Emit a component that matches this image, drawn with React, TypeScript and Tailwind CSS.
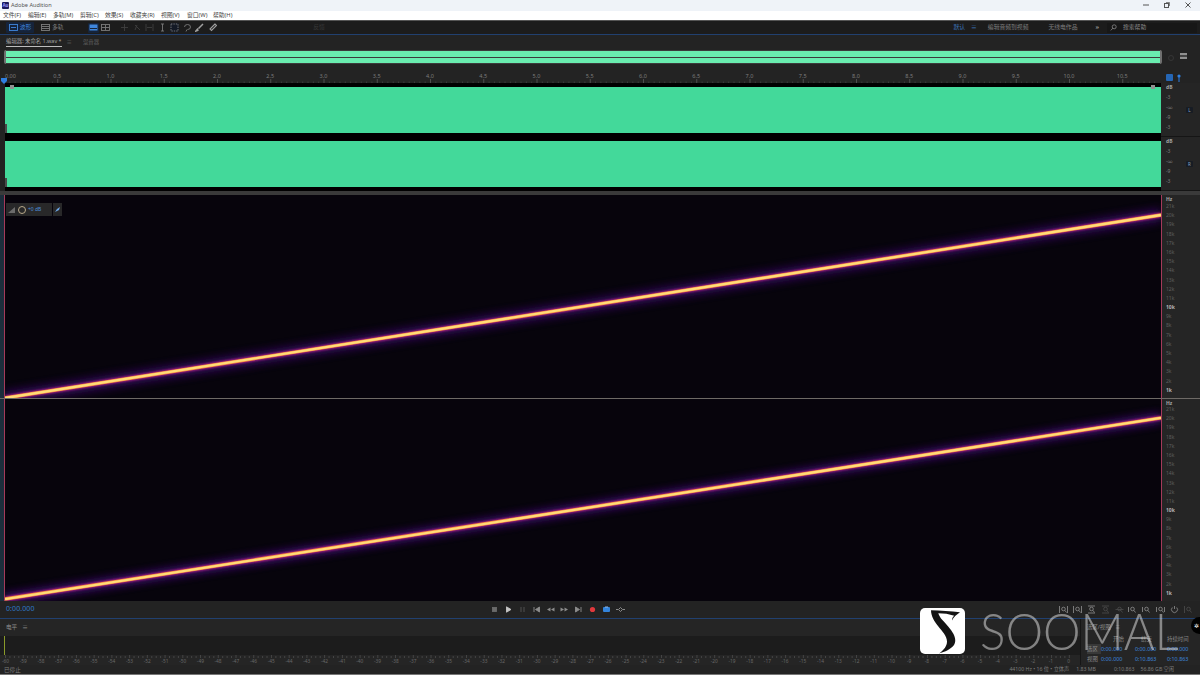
import React from "react";

const cjk = "font-['Noto_Sans','Noto_Sans_CJK_SC',sans-serif]";

const menus = [
  ["文件(F)", "w-[25px]"], ["编辑(E)", "w-[25px]"], ["多轨(M)", "w-[27px]"], ["剪辑(C)", "w-[25px]"], ["效果(S)", "w-[25px]"],
  ["收藏夹(R)", "w-[31px]"], ["视图(V)", "w-[26px]"], ["窗口(W)", "w-[26px]"], ["帮助(H)", "w-[30px]"],
];
const timeLabels = ["0.5","1.0","1.5","2.0","2.5","3.0","3.5","4.0","4.5","5.0","5.5","6.0","6.5","7.0","7.5","8.0","8.5","9.0","9.5","10.0","10.5"];
const freq = ["21k","20k","19k","18k","17k","16k","15k","14k","13k","12k","11k","10k","9k","8k","7k","6k","5k","4k","3k","2k","1k"];
const levels = Array.from({ length: 61 }, (_, i) => i - 60);

function TimeRuler() {
  return (
    <div className="relative flex h-[11px] w-[1157px] items-start bg-[#232323] text-[5.5px] leading-[9px] text-[#7c7c7c]">
      <div className="w-[30.6px] pl-[5px]">0.00</div>
      {timeLabels.map((t) => (
        <div key={t} className="w-[53.25px] text-center">{t}</div>
      ))}
      <svg className="absolute bottom-0 left-0" width="1157" height="4">
        {Array.from({ length: 218 }, (_, i) => {
          const x = 4.5 + i * 5.325;
          const major = i % 10 === 0;
          return <line key={i} x1={x} x2={x} y1={major ? 0 : 2.5} y2="4" stroke={major ? "#6c6c6c" : "#4c4c4c"} strokeWidth="0.6" />;
        })}
      </svg>
      <svg className="absolute left-[1px] top-[6px]" width="7" height="6" viewBox="0 0 7 6">
        <path d="M0 0h6v3L3 6 0 3z" fill="#2f7fe0" />
      </svg>
    </div>
  );
}

function Channel({ badge, pad, labels }: { badge: string; pad: string; labels: string[] }) {
  return (
    <div className="flex h-[54px]">
      <div className="w-[5px] bg-[#222]" />
      <div className={`relative w-[1156px] bg-black ${pad}`}>
        <div className="h-full w-full bg-[#43d99a]" />
        <div className="absolute bottom-[4px] left-0 h-[9px] w-[2px] bg-[#4a4a4a]" />
      </div>
      <div className="relative flex w-[39px] border-b border-[#151515] bg-[#252525]">
        <div className="flex h-full w-[25px] flex-col justify-between pb-[5px] pl-[5px] pt-[1px] text-[5px] leading-[7px] text-[#7f7f7f]">
          {labels.map((l, i) => <div key={i} className={i === 0 ? "font-bold text-[#a0a0a0]" : ""}>{l}</div>)}
        </div>
        <div className="mt-[24px] flex h-[6px] w-[7px] items-center justify-center rounded-[1px] bg-[#171c24] text-[4.5px] text-[#8aa4c4]">{badge}</div>
      </div>
    </div>
  );
}

function Spectrum({ id, height, y0, y1, hz }: { id: string; height: string; y0: number; y1: number; hz: string }) {
  return (
    <div className={`flex ${height}`}>
      <div className="w-[4px] bg-[#1c2e3c]" />
      <div className="w-[1px] bg-[#a53a5a]" />
      <div className="relative flex-1 overflow-hidden bg-[#07040c]">
        <svg className="block h-full w-full" viewBox="0 0 1156 203" preserveAspectRatio="none">
          <defs>
            <filter id={id + "a"} x="-5%" y="-60%" width="110%" height="220%"><feGaussianBlur stdDeviation="4" /></filter>
            <filter id={id + "b"} x="-5%" y="-60%" width="110%" height="220%"><feGaussianBlur stdDeviation="1.3" /></filter>
            <filter id={id + "c"} x="-5%" y="-60%" width="110%" height="220%"><feGaussianBlur stdDeviation="0.4" /></filter>
          </defs>
          <line x1="0" y1={y0} x2="1156" y2={y1} stroke="#3c0e70" strokeWidth="13" filter={`url(#${id}a)`} opacity="0.7" />
          <line x1="0" y1={y0} x2="1156" y2={y1} stroke="#a81f86" strokeWidth="5" filter={`url(#${id}b)`} />
          <line x1="0" y1={y0} x2="1156" y2={y1} stroke="#f58a3a" strokeWidth="3.4" filter={`url(#${id}c)`} />
          <line x1="0" y1={y0} x2="1156" y2={y1} stroke="#ffdc78" strokeWidth="2.3" filter={`url(#${id}c)`} />
        </svg>
      </div>
      <div className="w-[1px] bg-[#a53a5a]" />
      <div className="w-[38px] bg-[#252525] pl-[4px] text-[5px] text-[#5f5f5f]">
        <div className={`${hz} pt-[1px] font-bold leading-[7px] text-[#a5a5a5]`}>Hz</div>
        {freq.map((f) => (
          <div key={f} className={`h-[9.2px] leading-[9.2px] ${f === "10k" || f === "1k" ? "font-bold text-[#b5b5b5]" : ""}`}>{f}</div>
        ))}
      </div>
    </div>
  );
}

const Ico = ({ children, w = 9, className = "" }: { children: React.ReactNode; w?: number; className?: string }) => (
  <svg width={w} height="9" viewBox="0 0 9 9" className={`shrink-0 ${className}`} fill="none" stroke="currentColor" strokeWidth="0.9">{children}</svg>
);

function Toolbar() {
  return (
    <div className="flex h-[13px] items-center whitespace-nowrap bg-[#1c1c1c] text-[5.8px] text-[#7d7d7d]">
      <div className="ml-[6px] flex h-[11px] w-[28px] shrink-0 items-center justify-center gap-[2px] rounded-[1px] bg-[#15233a] text-[#3f86dc]">
        <Ico><rect x="0.5" y="1.5" width="8" height="6" /><path d="M2 4.5h5" /></Ico><span>波形</span>
      </div>
      <div className="ml-[7px] flex w-[23px] shrink-0 items-center gap-[2px]">
        <Ico><rect x="0.5" y="1.5" width="8" height="6" /><path d="M1 3.5h7M1 5.5h7" /></Ico><span>多轨</span>
      </div>
      <div className="ml-[24px] flex gap-[2px]">
        <span className="flex h-[10px] w-[11px] items-center justify-center rounded-[1px] bg-[#15233a]">
          <svg width="9" height="7"><rect x="0.5" y="0.5" width="8" height="6" fill="#3f86dc" /><path d="M1 4.5h7" stroke="#15233a" /></svg>
        </span>
        <span className="flex w-[9px] items-center text-[#7a7a7a]"><Ico><rect x="0.5" y="1.5" width="8" height="6" /><path d="M1 4.5h7M4.5 2v5" /></Ico></span>
      </div>
      <div className="ml-[10px] flex items-center gap-[3.5px]">
        <span className="text-[#404040]"><Ico><path d="M4.5 1v7M1 4.5h7" /></Ico></span>
        <span className="text-[#404040]"><Ico><path d="M2 2l5 5M2 7l2-5" /></Ico></span>
        <span className="text-[#404040]"><Ico><path d="M1 1v7M8 1v7M2 4.5h5" /></Ico></span>
        <span className="text-[#7a7a7a]"><Ico><path d="M4.5 1v7M3 1h3M3 8h3" /></Ico></span>
        <span className="rounded-[1px] bg-[#141a26] text-[#7a7a7a]"><Ico><rect x="1" y="1" width="7" height="7" strokeDasharray="1.4 1" /></Ico></span>
        <span className="text-[#7a7a7a]"><Ico><path d="M1.5 4a3 2.5 0 1 1 3 2.5M4 6.5L3 8.5" /></Ico></span>
        <span className="text-[#a0a0a0]"><Ico><path d="M8 1L3.5 5.5M3 5.5L1 8l2.5-1" strokeWidth="1.5" /></Ico></span>
        <span className="text-[#a0a0a0]"><Ico><path d="M7 1L2 6l1.5 1.5 5-5z" strokeWidth="1.1" /></Ico></span>
      </div>
      <div className="ml-[93px] flex h-[9px] w-[19px] items-center justify-center text-[#383838]">反馈</div>
      <div className="ml-auto flex items-center">
        <span className="text-[#3d78bd]">默认</span>
        <span className="ml-[6px] text-[#3d78bd]">≡</span>
        <span className="ml-[11px]">编辑音频到视频</span>
        <span className="ml-[20px]">无线电作品</span>
        <span className="ml-[18px] font-bold text-[#999]">»</span>
        <div className="ml-[8px] mr-[3px] flex h-[10px] w-[90px] items-center bg-[#171717] pl-[3px] text-[#8a8a8a]">
          <svg width="7" height="7" viewBox="0 0 7 7" fill="none" stroke="currentColor" strokeWidth="0.8"><circle cx="4.2" cy="2.8" r="2" /><path d="M2.8 4.2L.8 6.4" /></svg>
          <span className="ml-[6px]">搜索帮助</span>
        </div>
      </div>
    </div>
  );
}

function Transport() {
  const c = "text-[#8c8c8c]";
  return (
    <div className="relative flex h-[17px] items-center bg-[#232323]">
      <span className="ml-[6px] w-[29px] text-[7px] tracking-[0.1px] text-[#2f78c8]">0:00.000</span>
      <div className="ml-[455px] flex items-center gap-[5px]">
        <span className="text-[#6a6a6a]"><Ico><rect x="2.5" y="2.5" width="4" height="4" fill="currentColor" /></Ico></span>
        <span className="text-[#c5c5c5]"><Ico><path d="M2.5 1.8l4.5 2.7-4.5 2.7z" fill="currentColor" /></Ico></span>
        <span className="text-[#555]"><Ico><path d="M3 2v5M6 2v5" /></Ico></span>
        <span className={c}><Ico><path d="M2 2v5" /><path d="M7.5 2v5L3.5 4.5z" fill="currentColor" /></Ico></span>
        <span className={c}><Ico><path d="M4.5 2.5v4L1 4.5zM8.5 2.5v4L5 4.5z" fill="currentColor" stroke="none" /></Ico></span>
        <span className={c}><Ico><path d="M.5 2.5v4L4 4.5zM4.5 2.5v4L8 4.5z" fill="currentColor" stroke="none" /></Ico></span>
        <span className={c}><Ico><path d="M7 2v5" /><path d="M1.5 2v5l4-2.5z" fill="currentColor" /></Ico></span>
        <span className="text-[#e0383c]"><Ico><circle cx="4.5" cy="4.5" r="2.6" fill="currentColor" stroke="none" /></Ico></span>
        <span className="text-[#3384dc]"><Ico><rect x="1" y="2" width="7" height="5" rx="1" fill="currentColor" stroke="none" /><path d="M3 2h3" stroke="#9fc4f0" /></Ico></span>
        <span className="text-[#959595]"><Ico><path d="M4.5 2.5l2 2-2 2-2-2z" /><path d="M0 4.5h2M7 4.5h2" /></Ico></span>
      </div>
      <div className="ml-auto mr-[7.5px] flex items-center gap-[4.8px] text-[#858585]">
        {["M.5 1v7M8.5 1v7", "M.5 1v7M8.5 1v7", "M1 1h7M1 8h7", "M1 1h7M1 8h7", "M.5 4.5h8", "M.5 2v5", "M.5 2v5", "M.5 2v5M8.5 2v5"].map((d, i) => (
          <span key={i} className={i === 3 || i === 4 ? "text-[#484848]" : ""}>
            <Ico><path d={d} /><circle cx="4.5" cy="4" r="1.8" /><path d="M5.8 5.3L7.5 7.5" /></Ico>
          </span>
        ))}
        <span><Ico><path d="M4.5 1v3" /><path d="M2.3 2.5a3 3 0 1 0 4.4 0" /></Ico></span>
        <span className="text-[#484848]"><Ico><path d="M.5 1v7" /><circle cx="4.5" cy="4" r="1.8" /><path d="M5.8 5.3L7.5 7.5" /></Ico></span>
      </div>
    </div>
  );
}

function Watermark() {
  return (
    <div className="absolute left-[920px] top-[608px] flex items-center">
      <div className="h-[46px] w-[45px] rounded-[5px] bg-white">
        <svg width="45" height="46" viewBox="0 0 45 46" className="block">
          <path d="M11 2.3C20 2.6 31 3 40 4.3 37 6.5 33.5 9 32 12.5 32 10 33 8.8 34.3 7.7 29 6 24 5.2 18.3 5.2 19 7 20 9 21 10.5 26 16 31 21 33.5 26 35.5 30 36 34 34 37 31 41 25 44 19 45.5 24 42 27 38 27 33.5 27 28 22 23 18 18 14.5 14 11 8 11 2.3z" fill="#141414" />
        </svg>
      </div>
      <div className="ml-[15px] scale-y-[1.08] font-['Lato',sans-serif] text-[47.5px] font-light leading-[46px] text-white/45">SOOMAL</div>
    </div>
  );
}

export default function App() {
  return (
    <div className={`relative h-[675px] w-[1200px] overflow-hidden bg-[#232323] ${cjk}`}>
      {/* Title bar */}
      <div className="flex h-[10.5px] items-center bg-[#eff3f8] text-[5.6px] text-[#555]">
        <div className="ml-[2px] flex h-[7px] w-[7px] items-center justify-center rounded-[1px] bg-[#1a1a5e] text-[4.5px] font-bold leading-none text-[#9a9aff]">Au</div>
        <span className="ml-[2px]">Adobe Audition</span>
        <div className="ml-auto mr-[9px] flex items-center gap-[15px] text-[#555]">
          <svg width="6" height="6"><path d="M0 3h6" stroke="currentColor" /></svg>
          <svg width="6" height="6" fill="none"><rect x="0.5" y="1.5" width="4" height="4" stroke="currentColor" /><path d="M2 .5h3.5V4" stroke="currentColor" strokeWidth="0.7" /></svg>
          <svg width="6" height="6"><path d="M.5.5l5 5M5.5.5l-5 5" stroke="currentColor" /></svg>
        </div>
      </div>
      {/* Menu */}
      <div className="flex h-[9.5px] items-center bg-white pl-[3px] text-[5.8px] text-[#444]">
        {menus.map(([m, w]) => <div key={m} className={`${w} shrink-0`}>{m}</div>)}
      </div>
      <div className="h-[1px] bg-[#555]" />
      <Toolbar />
      <div className="h-[1px] bg-[#21406f]" />
      {/* Tabs */}
      <div className="flex h-[14px] items-center bg-[#232323] pl-[6px] text-[5.4px] text-[#a5a5a5]">
        <div className="border-b border-[#bdbdbd] pb-[1px] leading-[8px]">编辑器: 未命名 1.wav *</div>
        <span className="ml-[5px] text-[#7a7a7a]">≡</span>
        <span className="ml-[11px] text-[#626262]">混音器</span>
      </div>
      {/* Overview */}
      <div className="flex h-[23px] items-start bg-[#232323] pt-[1px]">
        <div className="ml-[4px] flex h-[14px] w-[1158px] flex-col gap-[1px] rounded-[2px] border-x-2 border-[#6f6f6f] bg-[#3c3c3c] py-[1px]">
          <div className="flex-1 bg-[#6aeeb0]" />
          <div className="flex-1 bg-[#6aeeb0]" />
        </div>
        <div className="ml-[6px] mt-[5px] h-[6px] w-[6px] rounded-full border border-[#363636]" />
        <div className="ml-[6px] mt-[3px] h-[6px] w-[7px] border-y-2 border-[#909090] bg-[#444]" />
      </div>
      {/* Ruler */}
      <div className="flex h-[11px]">
        <TimeRuler />
        <div className="flex w-[43px] items-center gap-[4px] bg-[#232323] pl-[9px]">
          <div className="h-[7px] w-[7px] rounded-[1px] bg-[#2566b5]" />
          <svg width="4" height="8"><circle cx="2" cy="2" r="1.6" fill="#2f7fe0" /><path d="M2 3v5" stroke="#2f7fe0" /></svg>
        </div>
      </div>
      {/* Waveforms */}
      <Channel badge="L" pad="pt-[4px] pb-[4px]" labels={["dB", "-3", "-∞", "-9", "-3"]} />
      <Channel badge="R" pad="pt-[4px] pb-[4px]" labels={["dB", "-3", "-∞", "-9", "-3"]} />
      <div className="h-[4px] bg-[#3a3a3a]" />
      {/* Spectrum */}
      <Spectrum id="s1" height="h-[203px]" y0={203} y1={20} hz="h-[7px]" />
      <div className="h-[1px] bg-[#6e6a66]" />
      <Spectrum id="s2" height="h-[202px]" y0={201} y1={19} hz="h-[6px]" />
      <Transport />
      <div className="h-[1px] bg-[#21406f]" />
      {/* Level panel */}
      <div className="flex h-[17px] items-center bg-[#252525] pl-[6px] text-[5.6px] text-[#8f8f8f]">
        <span>电平</span><span className="ml-[5px]">≡</span>
      </div>
      <div className="flex h-[19px] bg-[#1c1c1c] pl-[4px]"><div className="h-full w-[1px] bg-[#8a9a2a]" /></div>
      <div className="h-[10px] bg-[#252525]">
        <svg className="block" width="1078" height="3">
          {Array.from({ length: 241 }, (_, i) => (
            <line key={i} x1={5.5 + i * 4.4325} x2={5.5 + i * 4.4325} y1={i % 4 === 0 ? 0 : 1} y2="3" stroke="#5a5a5a" strokeWidth="0.6" />
          ))}
        </svg>
        <div className="flex pl-0 text-[4.8px] leading-[6px] text-[#686868]">
          {levels.map((l) => <div key={l} className="w-[17.73px] shrink-0 text-center first:ml-[-3.4px]">{l}</div>)}
        </div>
      </div>
      <div className="flex h-[9px] items-center bg-[#232323] pl-[4px] pt-[1px] text-[5.6px] text-[#7d7d7d]">
        <span>已停止</span>
        <div className="ml-auto flex items-center pr-[26px] text-[5.2px] text-[#7d7d7d]">
          <span>44100 Hz • 16 位 • 立体声</span>
          <span className="ml-[7px]">1.83 MB</span>
          <span className="ml-[18px]">0:10.863</span>
          <span className="ml-[6px]">56.86 GB 空闲</span>
        </div>
      </div>
      <div className="h-[1px] bg-[#777]" />

      {/* Overlays */}
      <div className="absolute left-[6px] top-[203px] flex h-[13px] items-center text-[5px]">
        <div className="flex h-full w-[46px] items-center bg-[#2c2c2c]/90 pl-[2px]">
          <svg width="7" height="6"><path d="M0 6L7 0v6z" fill="#6c6c6c" /></svg>
          <span className="ml-[3px] h-[8px] w-[8px] rounded-full border border-[#b9a98a]" />
          <span className="ml-[2px] text-[#4f8fdc]">+0 dB</span>
        </div>
        <div className="ml-[1px] flex h-full w-[9px] items-center justify-center bg-[#2c2c2c]/90">
          <svg width="5" height="5"><path d="M0 5l2-3 3-2-1 3z" fill="#6ea6e6" /></svg>
        </div>
      </div>
      <div className="absolute left-[10px] top-[85px] h-[4px] w-[4px] bg-[#8f8f8f]" />
      <div className="absolute left-[1151px] top-[85px] h-[4px] w-[4px] bg-[#8f8f8f]" />
      <div className="absolute left-[1080px] top-[619px] h-[46px] w-[120px] border-l border-[#161616] bg-[#252525] pl-[6px] text-[5.4px] text-[#8a8a8a]">
        <div className="mt-[4px] h-[8px] leading-[8px]">选区/视图 <span className="ml-[3px]">≡</span></div>
        <div className="mt-[3px] grid grid-cols-[14px_34px_32px_34px] leading-[10px]">
          <span /><span className="pl-[12px]">开始</span><span className="pl-[6px]">结束</span><span>持续时间</span>
          <span className="bg-[#555]/40">选区</span><span className="text-[#3d87df]">0:00.000</span><span className="text-[#3d87df]">0:00.000</span><span className="text-[#3d87df]">0:00.000</span>
          <span>视图</span><span className="text-[#3d87df]">0:00.000</span><span className="text-[#3d87df]">0:10.863</span><span className="text-[#3d87df]">0:10.863</span>
        </div>
      </div>
      <Watermark />
      <div className="absolute left-[1191px] top-[617px] flex h-[17px] w-[17px] items-center justify-center rounded-full bg-black pr-[7px] text-[6px] leading-none text-white">✲</div>
    </div>
  );
}
